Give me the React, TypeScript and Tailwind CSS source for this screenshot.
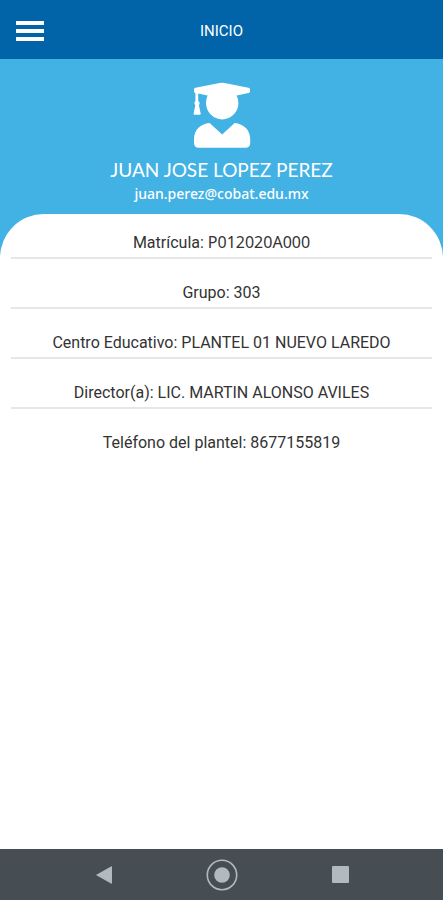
interface InfoItem {
  label: string;
  value: string;
  valueClass?: string;
}

const student = {
  name: "JUAN JOSE LOPEZ PEREZ",
  email: "juan.perez@cobat.edu.mx",
};

const items: InfoItem[] = [
  { label: "Matrícula", value: "P012020A000", valueClass: "font-['Noto_Sans',sans-serif]" },
  { label: "Grupo", value: "303" },
  { label: "Centro Educativo", value: "PLANTEL 01 NUEVO LAREDO" },
  { label: "Director(a)", value: "LIC. MARTIN ALONSO AVILES" },
  { label: "Teléfono del plantel", value: "8677155819" },
];

function GraduateIcon() {
  return (
    <svg viewBox="0 0 58 66" className="h-[66px] w-[58px]" fill="currentColor" aria-hidden="true">
      <path d="M26.5 1Q29 .4 31.5 1L55.5 5.8Q57 6.2 57 7.4V9.4Q57 10.6 55.6 11L43.6 13.6Q45.4 17 45.4 21A16.2 16.4 0 0 1 13 21Q13 17 14.6 13.6L5.2 11.6V19Q7.8 20.8 5.9 23.2L7.7 31.4Q7.9 32.7 6.7 32.7H1.5Q.4 32.7 .6 31.4L2.3 23.2Q.4 20.8 2.4 19V11Q1 10.6 1 9.4V7.4Q1 6.2 2.5 5.8Z" />
      <path d="M16.6 41L29.2 52.6L41.6 41C51 41.8 57.2 48.4 57.2 57V61Q57.2 65.8 52.4 65.8H5.8Q1 65.8 1 61V57C1 48.4 7 41.8 16.6 41Z" />
    </svg>
  );
}

function TopBar() {
  return (
    <header className="grid h-[59px] grid-cols-[1fr_auto_1fr] items-center bg-[#0264a8] px-4 pt-0.5 text-white">
      <button type="button" aria-label="Menú" className="flex w-7 flex-col gap-1">
        <span className="h-1 w-full bg-white" />
        <span className="h-1 w-full bg-white" />
        <span className="h-1 w-full bg-white" />
      </button>
      <h1 className="text-[15px] leading-5">INICIO</h1>
    </header>
  );
}

function NavBar() {
  return (
    <nav className="grid h-[51px] grid-cols-[1fr_auto_1fr] items-center gap-[94px] bg-[#474e53] text-[#b3babd]">
      <button type="button" aria-label="Atrás" className="justify-self-end">
        <svg viewBox="0 0 16 18" className="h-[18px] w-4" fill="currentColor">
          <path d="M0 9L15 .4Q16 0 16 1V17Q16 18 15 17.6Z" />
        </svg>
      </button>
      <button type="button" aria-label="Inicio">
        <svg viewBox="0 0 32 32" className="size-8">
          <circle cx="16" cy="16" r="14.7" fill="none" stroke="currentColor" strokeWidth="1.6" />
          <circle cx="16" cy="16" r="7.8" fill="currentColor" />
        </svg>
      </button>
      <button type="button" aria-label="Recientes" className="justify-self-start">
        <svg viewBox="0 0 17 17" className="size-[17px]">
          <rect width="17" height="17" rx="1" fill="currentColor" />
        </svg>
      </button>
    </nav>
  );
}

export default function App() {
  return (
    <div className="flex min-h-screen flex-col bg-white font-[Roboto,sans-serif]">
      <TopBar />

      <section className="-mb-12 flex flex-col items-center bg-[#42b2e4] px-4 pt-[23px] pb-[58px] text-white">
        <GraduateIcon />
        <h2 className="mt-2 font-[Lato,sans-serif] text-[19px] leading-7">{student.name}</h2>
        <p className="font-['Noto_Sans',sans-serif] text-[14px] leading-5 font-medium">{student.email}</p>
      </section>

      <main className="flex-1 rounded-t-[44px] bg-white px-[11px]">
        <ul className="divide-y-2 divide-[#e6e6e6]">
          {items.map((item) => (
            <li key={item.label} className="pb-0.5 text-center text-base leading-6 text-[#333333] not-first:pt-[22px] first:pt-4">
              {item.label}: <span className={item.valueClass}>{item.value}</span>
            </li>
          ))}
        </ul>
      </main>

      <NavBar />
    </div>
  );
}
